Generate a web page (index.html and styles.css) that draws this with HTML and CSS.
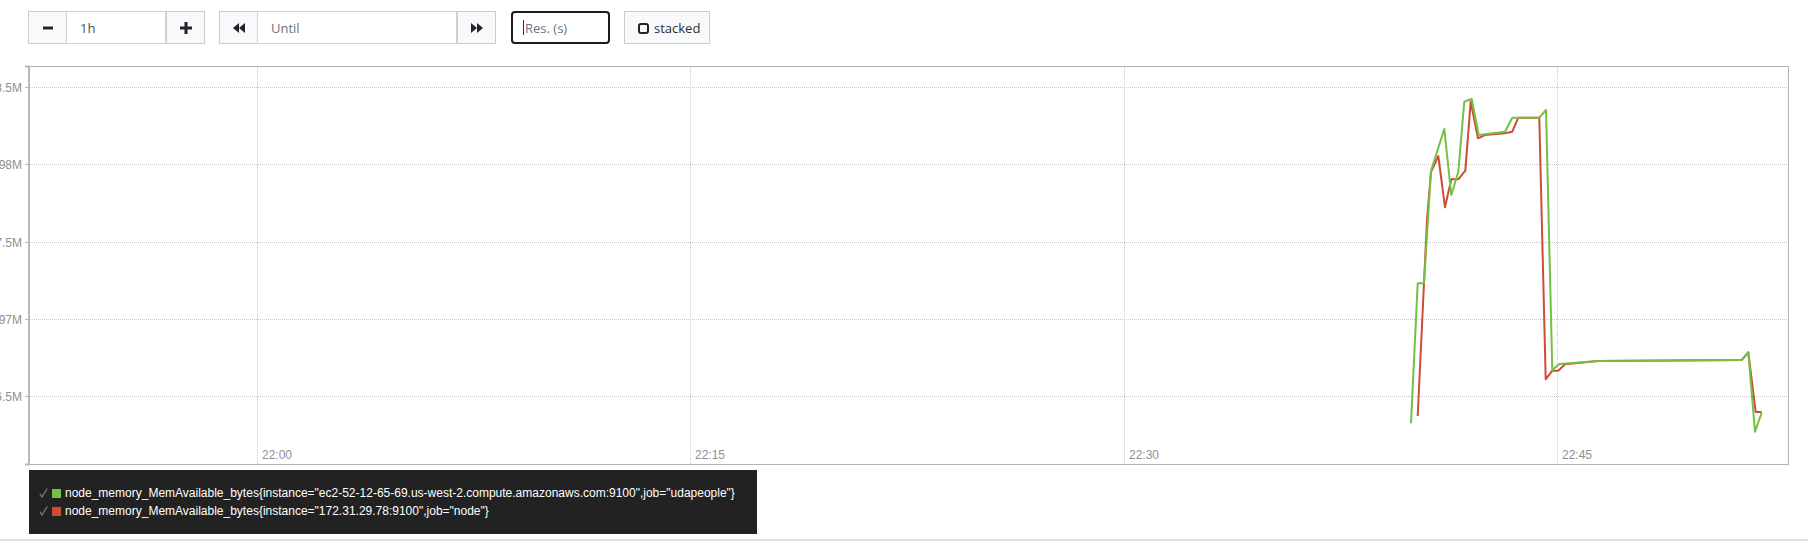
FILE: index.html
```html
<!DOCTYPE html>
<html>
<head>
<meta charset="utf-8">
<link rel="stylesheet" href="styles.css">
</head>
<body>
<div class="toolbar">
  <div class="group">
    <button class="btn" title="Shrink the time range."><svg width="12" height="12" viewBox="0 0 12 12"><rect x="1" y="4.5" width="10" height="3" fill="#212529"/></svg></button>
    <div class="field range">1h</div>
    <button class="btn" title="Widen the time range."><svg width="12" height="12" viewBox="0 0 12 12"><rect x="0" y="4.5" width="12" height="3" fill="#212529"/><rect x="4.5" y="0" width="3" height="12" fill="#212529"/></svg></button>
  </div>
  <div class="group">
    <button class="btn" title="Rewind the end time."><svg width="12" height="10" viewBox="0 0 12 10"><polygon points="6,0 0,5 6,10" fill="#212529"/><polygon points="12,0 6,5 12,10" fill="#212529"/></svg></button>
    <div class="field until placeholder">Until</div>
    <button class="btn" title="Advance the end time."><svg width="12" height="10" viewBox="0 0 12 10"><polygon points="0,0 6,5 0,10" fill="#212529"/><polygon points="6,0 12,5 6,10" fill="#212529"/></svg></button>
  </div>
  <div class="field res placeholder"><span class="caret"></span>Res. (s)</div>
  <button class="btn stacked"><span class="checkbox"></span>stacked</button>
</div>

<svg class="chart" width="1808" height="414" viewBox="0 56 1808 414">
  <g class="grid">
    <line x1="30" y1="87.5" x2="1789" y2="87.5"/>
    <line x1="30" y1="164.5" x2="1789" y2="164.5"/>
    <line x1="30" y1="242.5" x2="1789" y2="242.5"/>
    <line x1="30" y1="319.5" x2="1789" y2="319.5"/>
    <line x1="30" y1="396.5" x2="1789" y2="396.5"/>
    <line x1="257.5" y1="67" x2="257.5" y2="464"/>
    <line x1="690.5" y1="67" x2="690.5" y2="464"/>
    <line x1="1124.5" y1="67" x2="1124.5" y2="464"/>
    <line x1="1557.5" y1="67" x2="1557.5" y2="464"/>
  </g>
  <rect class="frame" x="29.5" y="66.5" width="1759" height="398"/>
  <path class="axis" d="M25,66.5 H29 V464.5 H25"/>
  <g class="ticks">
    <line x1="25" y1="87.5" x2="29" y2="87.5"/>
    <line x1="25" y1="164.5" x2="29" y2="164.5"/>
    <line x1="25" y1="242.5" x2="29" y2="242.5"/>
    <line x1="25" y1="319.5" x2="29" y2="319.5"/>
    <line x1="25" y1="396.5" x2="29" y2="396.5"/>
  </g>
  <g class="ylabels">
    <text x="22" y="91.5">98.5M</text>
    <text x="22" y="168.5">98M</text>
    <text x="22" y="246.5">97.5M</text>
    <text x="22" y="323.5">97M</text>
    <text x="22" y="400.5">96.5M</text>
  </g>
  <g class="xlabels">
    <text x="262" y="459">22:00</text>
    <text x="695" y="459">22:15</text>
    <text x="1129" y="459">22:30</text>
    <text x="1562" y="459">22:45</text>
  </g>
  <polyline class="series red" points="1417.7,416 1427,220 1431,172 1438.3,156 1445,207.3 1451.3,179.3 1458.3,179.3 1465.3,170.7 1470.7,101.7 1478,138.3 1485,135 1505,133.3 1512.3,131.7 1518.3,117.7 1539.3,117.7 1545.7,379.3 1552.3,370.7 1558.3,370.7 1565,364.3 1598,361 1741.7,360 1748.3,352.3 1755.7,412 1761.7,412"/>
  <polyline class="series green" points="1411,423.3 1417.7,283.3 1424,283.3 1431,170.7 1444.3,129 1451.3,195 1458.3,171.7 1464.3,101.7 1471.7,99 1478.7,135 1505,131.7 1512.3,117.7 1539.3,117.7 1546,110 1552.3,370 1559.3,364 1598.3,361 1741.7,360 1748.3,352.3 1755,431.7 1761.7,412.7"/>
</svg>

<div class="legend">
  <div class="legend-line"><svg class="check" width="9" height="10" viewBox="0 0 9 10"><polyline points="0.8,5.5 3,9 8.2,0.5"/></svg><span class="swatch swatch-green"></span><span class="label">node_memory_MemAvailable_bytes{instance="ec2-52-12-65-69.us-west-2.compute.amazonaws.com:9100",job="udapeople"}</span></div>
  <div class="legend-line"><svg class="check" width="9" height="10" viewBox="0 0 9 10"><polyline points="0.8,5.5 3,9 8.2,0.5"/></svg><span class="swatch swatch-red"></span><span class="label">node_memory_MemAvailable_bytes{instance="172.31.29.78:9100",job="node"}</span></div>
</div>
<div class="rule"></div>
</body>
</html>
```

FILE: styles.css
```css
html, body {
  margin: 0;
  padding: 0;
  background: #fff;
}

.toolbar {
  box-sizing: border-box;
  height: 44px;
  padding: 11px 0 0 28px;
  display: flex;
  align-items: flex-start;
  font-family: "Open Sans", Lato, sans-serif;
  font-size: 13px;
}

.group {
  display: flex;
  margin-right: 14px;
}

.group > * + * {
  margin-left: -1px;
}

.btn {
  box-sizing: border-box;
  width: 39px;
  height: 33px;
  border: 1px solid #cccccc;
  background: #f8f9fa;
  color: #212529;
  padding: 0;
  margin: 0;
  display: flex;
  align-items: center;
  justify-content: center;
  font: inherit;
}

.field {
  box-sizing: border-box;
  height: 33px;
  border: 1px solid #ced4da;
  background: #fff;
  color: #495057;
  padding: 0 13px;
  display: flex;
  align-items: center;
}

.placeholder {
  color: #6c757d;
}

.range {
  width: 100px;
}

.until {
  width: 200px;
}

.res {
  width: 99px;
  margin-left: 1px;
  margin-right: 14px;
  border: 2px solid #1b1b1b;
  border-radius: 4px;
  padding: 0 0 0 10px;
}

.caret {
  display: inline-block;
  width: 1px;
  height: 15px;
  background: #333;
  margin-right: 1px;
}

.stacked {
  width: 86px;
  justify-content: flex-start;
  padding-left: 13px;
  color: #2b2f33;
}

.checkbox {
  box-sizing: border-box;
  display: inline-block;
  width: 11px;
  height: 11px;
  border: 2px solid #222;
  border-radius: 3px;
  margin-right: 5px;
  margin-top: 1px;
}

.chart {
  display: block;
  margin-top: 12px;
}

.grid line {
  stroke: #c8c8c8;
  stroke-width: 1;
  stroke-dasharray: 1 1;
}

.frame {
  fill: none;
  stroke: #b4b4b4;
  stroke-width: 1;
}

.axis {
  fill: none;
  stroke: #b8b8b8;
  stroke-width: 2;
}

.ticks line {
  stroke: #b8b8b8;
  stroke-width: 1;
}

.ylabels text {
  font-family: "Liberation Sans", Arial, sans-serif;
  font-size: 12px;
  fill: #8f8f8f;
  text-anchor: end;
}

.xlabels text {
  font-family: "Liberation Sans", Arial, sans-serif;
  font-size: 12px;
  fill: #8f8f8f;
}

.series {
  fill: none;
  stroke-width: 2;
  stroke-linejoin: round;
}

.series.green {
  stroke: #74c043;
}

.series.red {
  stroke: #cf4b33;
}

.legend {
  box-sizing: border-box;
  width: 728px;
  height: 64px;
  margin-left: 29px;
  padding: 14px 0 14px 10px;
  background: #222222;
  color: #ffffff;
  font-family: "Liberation Sans", Arial, sans-serif;
  font-size: 12px;
}

.legend-line {
  height: 18px;
  display: flex;
  align-items: center;
  white-space: nowrap;
}

.check {
  display: block;
  margin-right: 4px;
}

.check polyline {
  fill: none;
  stroke: #7a7a7a;
  stroke-width: 1.3;
}

.swatch {
  display: inline-block;
  width: 9px;
  height: 9px;
  margin-right: 4px;
}

.swatch-green {
  background: #74c043;
}

.swatch-red {
  background: #cf4b33;
}

.rule {
  margin-top: 5px;
  height: 2px;
  background: #e2e2e2;
}
```
